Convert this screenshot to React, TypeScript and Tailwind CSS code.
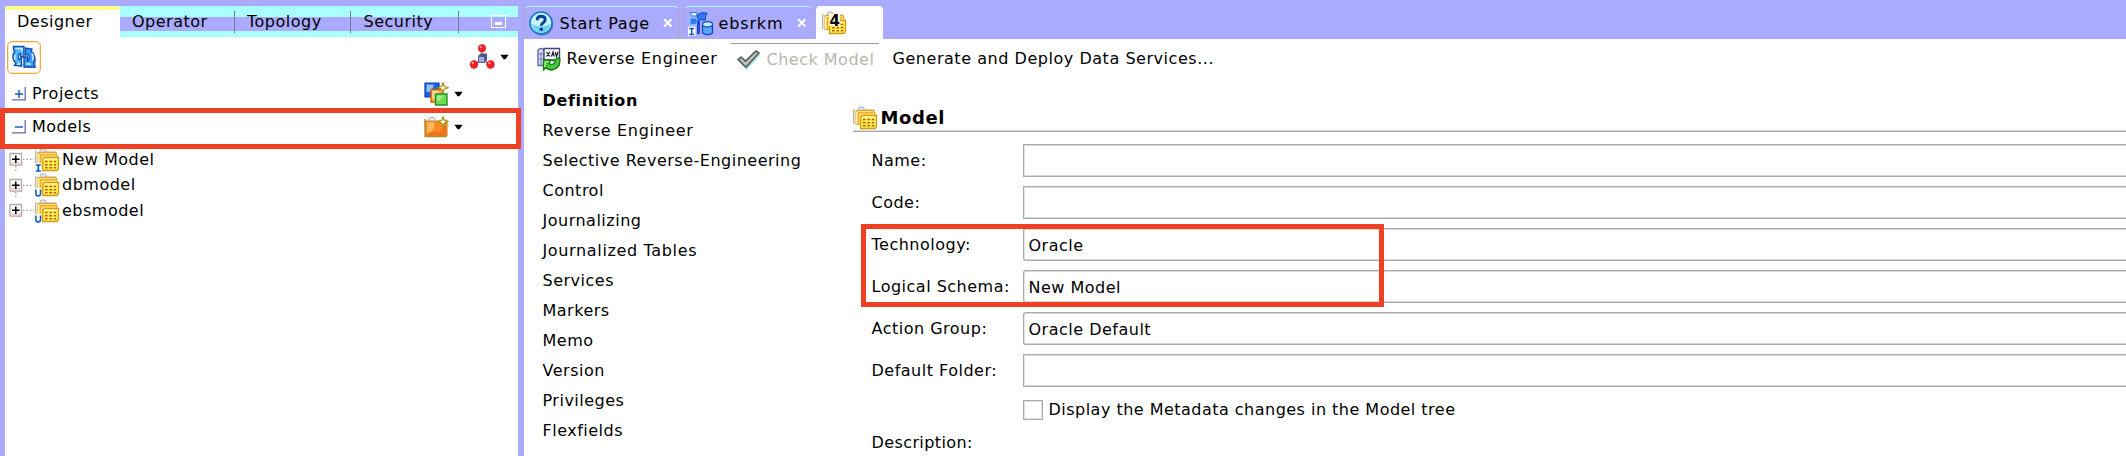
import React from "react";

function Text({ children, className = "" }: { children: React.ReactNode; className?: string }) {
  return <span className={"whitespace-pre " + className}>{children}</span>;
}

function Caret() {
  return (
    <svg width="9" height="6" viewBox="0 0 9 6">
      <path d="M0.4 0.8h8.2L5.4 5.2H3.6z" fill="#000" />
    </svg>
  );
}

function RefreshIcon() {
  return (
    <svg width="26" height="26" viewBox="0 0 26 26">
      <path d="M14 14v10h11V14zM5 21l5 2 4-3z" fill="#8a8a9a" opacity=".7" />
      <path d="M2.500 2.500H13V13H9.500V9.500C7 10 6.500 13 8 15.500L10.500 14v8L3.500 21.500l1.500-2C1 16 1 10 4 7.500L2.500 6z" fill="#58b4fc" stroke="#0c50b0" strokeWidth="1.300" />
      <path d="M14.500 11V4l6.500 1-1 2c4.500 3 5 9 2.500 12.500L24 23H13V13h3.500v4C19 16 19 12.500 17 10.500z" fill="#3c9cf8" stroke="#0c50b0" strokeWidth="1.300" />
      <path d="M4.500 4.500h6.500v3M3.800 11v5M6 20h3M21 9.500q2 3 .5 7M15 20h5" fill="none" stroke="#c8ecff" strokeWidth="1.500" />
    </svg>
  );
}

function MoleculeIcon() {
  return (
    <svg width="26" height="26" viewBox="0 0 26 26">
      <path d="M13 6v6M5 21l8-6 8 6" stroke="#888" strokeWidth="1.500" fill="none" />
      <path d="M9 12l2.500-2.500H18V16l-2 2.500H9z" fill="#55557f" />
      <path d="M9.500 12.500h6v6h-6z" fill="#a7acd8" stroke="#606090" />
      <circle cx="13" cy="4.300" r="4" fill="#ee2228" />
      <circle cx="5" cy="20.500" r="4.200" fill="#ee2228" />
      <circle cx="21.500" cy="20.500" r="4.200" fill="#ee2228" />
      <circle cx="11.800" cy="3" r="1.200" fill="#ff9a9a" />
      <circle cx="3.800" cy="19" r="1.200" fill="#ff9a9a" />
      <circle cx="20.300" cy="19" r="1.200" fill="#ff9a9a" />
    </svg>
  );
}

function Sparkle() {
  return <path d="M19 .6l1.300 3.700L24 5.700l-3.700 1.400L19 11l-1.300-3.900L14 5.700l3.700-1.400z" fill="#fffde0" stroke="#a89018" strokeWidth="1.200" />;
}

function ProjectIcon() {
  return (
    <svg width="25" height="24" viewBox="0 0 25 24">
      <path d="M1 1h14v14H1z" fill="#1d5fe0" stroke="#0c3aa8" strokeWidth="1.200" />
      <path d="M2.500 2.500h7v2.500l-4 5h-3z" fill="#8cc4ff" />
      <path d="M7 7.500h12v12.500H7z" fill="#ffae48" stroke="#d06008" strokeWidth="1.400" />
      <path d="M8.500 9h6v3h-4v5h-2z" fill="#ffe4a0" />
      <path d="M11.500 12h11.500v11H11.500z" fill="#6ddc50" stroke="#249028" strokeWidth="1.400" />
      <path d="M13 13.500h6l-3 5h-3z" fill="#a4f090" />
      <Sparkle />
    </svg>
  );
}

function NewFolderIcon() {
  return (
    <svg width="25" height="22" viewBox="0 0 25 22">
      <path d="M4 4l2-2.500h4l1 2.500" fill="#e8ecf4" stroke="#a8b0c0" />
      <path d="M1 5h15l7-1v16H2z" fill="#f98a28" stroke="#c87a20" />
      <path d="M3 6h7v6l-3 4-4 1z" fill="#ffb858" />
      <path d="M3 19l5-3h8l6-8v11.500z" fill="#f05818" opacity=".5" />
      <path d="M1 3v17.500h22" stroke="#b88a30" fill="none" strokeWidth="1.300" />
      <Sparkle />
    </svg>
  );
}

function ModelIcon({ badge }: { badge?: "I" | "U" | "4" }) {
  return (
    <svg width="25" height="24" viewBox="0 0 25 24">
      <path d="M.7 3v15" stroke="#b4b4ac" strokeWidth="1.300" />
      <path d="M5 3l1-2h4l2 3" fill="#d8eafa" stroke="#a8b4c4" />
      <path d="M3 4.500h18l1 3v11H3z" fill="#ffe468" stroke="#e0a838" strokeWidth="1.200" />
      <path d="M5.500 18V6.800h15" fill="none" stroke="#f8a838" strokeWidth="1.500" />
      <path d="M3.500 6v12" stroke="#fff4b8" />
      <path d="M4 4h17" stroke="#c8a868" />
      <path d="M8 10.500l2-1h13.500v11l-1.500 2H7.500z" fill="#fff050" stroke="#d09a18" strokeWidth="1.300" />
      <path d="M9 11h13" stroke="#fffbd0" />
      <path d="M10 12.700h2.600v1.500H10zM14.400 12.700H17v1.500h-2.600zM18.800 12.700h2.400v1.500h-2.400zM10 15.900h2.600v1.500H10zM14.400 15.900H17v1.500h-2.600zM18.800 15.900h2.400v1.500h-2.400zM10 19h2.600v1.400H10zM14.400 19H17v1.400h-2.600zM18.800 19h2.400v1.400h-2.400z" fill="#b85a10" />
      {badge === "I" && (
        <>
          <path d="M0 15h6.500v9H0z" fill="#fff" />
          <path d="M.8 17h5M3.300 17v6M.8 23h5" stroke="#1058b8" strokeWidth="1.700" />
        </>
      )}
      {badge === "U" && (
        <>
          <path d="M0 15h6.500v9H0z" fill="#fff" />
          <path d="M.9 16.500v4q0 2.500 2.300 2.500t2.300-2.500v-4" fill="none" stroke="#1058b8" strokeWidth="1.500" />
        </>
      )}
      {badge === "4" && <path d="M7 3h11v12H7z" fill="#fff8d8" />}
    </svg>
  );
}

function HelpIcon() {
  return (
    <svg width="25" height="25" viewBox="0 0 25 25">
      <circle cx="13" cy="13.200" r="11.300" fill="#6878b8" />
      <circle cx="12" cy="12" r="11" fill="#c8f4ff" stroke="#1878c8" strokeWidth="1.600" />
      <path d="M3 13a9 9 0 0 0 18 0q-9 5-18 0z" fill="#70d0fa" />
      <path d="M8.200 9.200q0-4 4-4t4 3.600q0 2-2.200 3.200-1.700 1-1.700 2.700" fill="none" stroke="#0a3c98" strokeWidth="2.900" />
      <circle cx="12.300" cy="18.300" r="1.800" fill="#0a3c98" />
    </svg>
  );
}

function PackageIcon() {
  return (
    <svg width="26" height="25" viewBox="0 0 26 25">
      <path d="M2 1.500h7v3.500H4z" fill="#e0f4ff" stroke="#3878e8" />
      <path d="M9 4q4-3.500 10-2l-1.500 3v4H10z" fill="#2f78ee" stroke="#1448c8" />
      <path d="M2 7h7v6l-7 1z" fill="#2f78ee" stroke="#88c8ff" />
      <path d="M9 9v14h3V10z" fill="#1f48d8" />
      <path d="M14.500 13v9q5 3.500 10 0v-9z" fill="#58a4f8" stroke="#1440c0" strokeWidth="1.200" />
      <ellipse cx="19.500" cy="13.300" rx="5" ry="2.600" fill="#c4ecff" stroke="#1440c0" strokeWidth="1.200" />
      <path d="M0 15.500h7.500V25H0z" fill="#fff" />
      <path d="M1.200 17.500h5M3.700 17v6M1.200 23.500h5" stroke="#1058b8" strokeWidth="1.600" />
    </svg>
  );
}

function ReverseIcon() {
  return (
    <svg width="24" height="24" viewBox="0 0 24 24">
      <path d="M1 3q3-3 6 0v15.500H1z" fill="#dcdcf8" stroke="#6868a8" strokeWidth="1.400" />
      <path d="M1 7h8M1 12h8M4 5v13" stroke="#7878b8" />
      <path d="M7 1.500h15.500V13H7z" fill="#f8f8ff" stroke="#484878" strokeWidth="1.400" />
      <path d="M9.500 5l3.500 4.500M13 5L9.500 9.500M14.500 9.500L16 5l1.200 4.500M18.300 5l1.200 4.500L21 5" stroke="#181828" strokeWidth="1.200" fill="none" />
      <path d="M6.500 13H14l-2 3.500q4 2.500 6.500-2L16 13.500l6.500-3q2 10.500-7.500 12.500-4 0-6-2.500L6.500 23z" fill="#48c838" stroke="#187818" strokeWidth="1.300" />
      <path d="M8 14.500h4M8 15v5" stroke="#b8ffa0" strokeWidth="1.200" />
    </svg>
  );
}

function CheckIcon() {
  return (
    <svg width="24" height="20" viewBox="0 0 24 20">
      <path d="M3 11l7 7.500L23 4" fill="none" stroke="#a0f4f4" strokeWidth="2" />
      <path d="M1 9.500l3-2.500 4.500 4L19 1l3 2L9 17.500z" fill="#aaa" stroke="#555" strokeWidth="1.400" />
      <path d="M4 9.500l4.500 4.500L19.500 3" fill="none" stroke="#ddd" />
    </svg>
  );
}

function CloseMark() {
  return (
    <svg width="10" height="10" viewBox="0 0 10 10">
      <path d="M1.200 1.200l7.200 7.200M8.400 1.200L1.200 8.400" stroke="#fff" strokeWidth="2.100" />
    </svg>
  );
}

function Toggle({ open }: { open?: boolean }) {
  return (
    <svg width="14" height="14" viewBox="0 0 14 14">
      <path d="M0 12.900h13.200V0" fill="none" stroke="#6868b8" strokeWidth="1.300" />
      <path d={open ? "M3 7h8" : "M3 7h8M7 3v8"} stroke="#1a60a8" strokeWidth="1.500" />
    </svg>
  );
}

function TreeRow({ label, badge, last }: { label: string; badge: "I" | "U"; last?: boolean }) {
  return (
    <div className="flex h-[25.5px] items-center pl-1">
      <svg width="26" height="25.5" viewBox="0 0 26 25.500">
        <path d="M1 6.500h11.500v11.500H1z" fill="#fff" stroke="#aaa" strokeWidth="1.300" />
        <path d="M1.700 15.300h10v2.200h-10z" fill="#ffd0d0" />
        <path d="M3 12.300h7.600M6.800 8.500v7.600" stroke="#000" strokeWidth="1.500" />
        <path d="M14 12.300h11" stroke="#999" strokeWidth="1.300" strokeDasharray="1.400 2.100" />
        {!last && <path d="M6.800 19v6" stroke="#999" strokeWidth="1.300" strokeDasharray="1.400 2.100" />}
      </svg>
      <div className="w-[25px] shrink-0"><ModelIcon badge={badge} /></div>
      <Text className="pl-[2px]">{label}</Text>
    </div>
  );
}

function SideTab({ label, className }: { label: string; className: string }) {
  return (
    <div className={"flex h-[31px] items-center justify-between " + className}>
      <Text>{label}</Text>
      <span className="h-[22px] w-px bg-[#70809c]" />
    </div>
  );
}

function Sidebar() {
  return (
    <aside className="relative flex w-[523.5px] shrink-0 flex-col bg-[#aaaaff] pl-[5px] pr-[6px] pt-[6px]">
      <div className="flex h-[31px] shrink-0 bg-[linear-gradient(#aaffff_0_11.5px,#aaaaff_11.5px_25.5px,#aaffff_25.5px)]">
        <div className="flex w-[115px] items-center rounded-t border-t-[4px] border-[#ffff88] bg-white pb-[3px] pl-3">
          <Text>Designer</Text>
        </div>
        <SideTab label="Operator" className="w-[115px] pl-[12px]" />
        <SideTab label="Topology" className="w-[115.5px] pl-[12px]" />
        <SideTab label="Security" className="w-[108px] pl-[13px]" />
        <div className="flex flex-1 items-center pl-[32px]">
          <div className="flex h-[13px] w-[15px] items-end justify-center border border-white pb-[2px]">
            <div className="h-[3px] w-[7px] bg-white" />
          </div>
        </div>
      </div>
      <div className="flex flex-1 flex-col bg-white">
        <div className="flex h-[40px] items-center justify-between pl-[2px] pr-[9px]">
          <div className="flex h-[33px] w-[34px] items-center justify-center rounded-[5px] border-[1.5px] border-[#ffa838] shadow-[inset_0_0_0_1px_#ffe6c0]">
            <RefreshIcon />
          </div>
          <div className="flex items-center gap-[5px]"><MoleculeIcon /><Caret /></div>
        </div>
        <div className="flex h-[33px] items-center pl-[7px]">
          <Toggle />
          <Text className="w-[398px] pl-[6px]">Projects</Text>
          <ProjectIcon />
          <span className="pl-[5px]"><Caret /></span>
        </div>
        <div className="flex h-[34px] items-center pl-[7px]">
          <Toggle open />
          <Text className="w-[398px] pl-[6px]">Models</Text>
          <NewFolderIcon />
          <span className="pl-[5px]"><Caret /></span>
        </div>
        <div className="pt-[3px]">
          <TreeRow label="New Model" badge="I" />
          <TreeRow label="dbmodel" badge="U" />
          <TreeRow label="ebsmodel" badge="U" last />
        </div>
      </div>
      <div className="absolute left-0 top-[107.5px] h-[41px] w-[520.5px] border-[5px] border-[#ee4023]" />
    </aside>
  );
}

const sections = ["Definition", "Reverse Engineer", "Selective Reverse-Engineering", "Control", "Journalizing", "Journalized Tables", "Services", "Markers", "Memo", "Version", "Privileges", "Flexfields"];

const fields = [
  { label: "Name:", value: "", combo: false },
  { label: "Code:", value: "", combo: false },
  { label: "Technology:", value: "Oracle", combo: true },
  { label: "Logical Schema:", value: "New Model", combo: true },
  { label: "Action Group:", value: "Oracle Default", combo: true },
  { label: "Default Folder:", value: "", combo: false },
];

function EditorTabs() {
  return (
    <div className="flex h-[39px] shrink-0 bg-[#aaaaff] pt-[6px]">
      <div className="flex w-[156px] items-center rounded-t-md border-x border-t border-x-[#b0a8c8] border-t-[#aaffff] pl-[4px]">
        <HelpIcon />
        <Text className="w-[109px] pl-[6px] pt-[2px] tracking-[0.75px]">Start Page</Text>
        <CloseMark />
      </div>
      <div className="ml-[3px] flex w-[131px] items-center rounded-t-md border-x border-t border-x-[#b0a8c8] border-t-[#aaffff] pl-[4px]">
        <PackageIcon />
        <Text className="w-[83px] pl-[5px] pt-[2px] tracking-[0.85px]">ebsrkm</Text>
        <CloseMark />
      </div>
      <div className="relative ml-[2px] flex w-[67px] items-center rounded-t bg-white pl-[6px]">
        <ModelIcon badge="4" />
        <span className="absolute left-[14px] top-[8px] text-[15px] font-bold leading-[14px] tracking-normal">4</span>
      </div>
    </div>
  );
}

function Editor() {
  return (
    <main className="flex min-w-0 flex-1 flex-col bg-white">
      <EditorTabs />
      <div className="flex h-[40px] shrink-0 items-center pl-[13px]">
        <ReverseIcon />
        <Text className="w-[170px] pl-[6px] tracking-[0.65px]">Reverse Engineer</Text>
        <div className="flex h-[32px] w-[148px] items-center border-t border-[#999] pl-[6px] text-[#b8b8b0]">
          <CheckIcon />
          <Text className="pl-[6px]">Check Model</Text>
        </div>
        <Text className="pl-[14px] tracking-[0.54px]">Generate and Deploy Data Services...</Text>
      </div>
      <div className="flex min-h-0 flex-1">
        <nav className="flex w-[329px] shrink-0 flex-col pl-[19px] pt-[7px]">
          {sections.map((s, i) => (
            <div key={s} className={"flex h-[30px] shrink-0 items-center " + (i === 0 ? "font-bold tracking-[0.65px]" : i === 1 || i === 5 ? "tracking-[0.65px]" : "")}>
              <Text>{s}</Text>
            </div>
          ))}
        </nav>
        <section className="relative min-w-0 flex-1 pt-[25px]">
          <div className="flex h-[28px] items-center border-b border-[#aaa] font-bold shadow-[inset_0_-1px_#d8d8d8]">
            <ModelIcon />
            <Text className="pl-[3px] pt-px text-[18px] tracking-[0.6px]">Model</Text>
          </div>
          <div className="pt-[12px]">
            {fields.map((f) => (
              <div key={f.label} className="mb-[9px] flex h-[33px] pl-[19px]">
                <div className="flex w-[151px] shrink-0 items-center"><Text>{f.label}</Text></div>
                <div className={"flex flex-1 items-center border border-r-0 border-[#aaa] pl-[5px] pt-[2px] shadow-[inset_0_1px_#d8d8d8,inset_0_-1px_#d8d8d8,inset_1px_0_#e4e4e4] " + (f.combo ? "rounded-l-[3px]" : "")}>
                  <Text>{f.value}</Text>
                </div>
              </div>
            ))}
          </div>
          <div className="flex items-center pl-[170px] pt-[4px]">
            <div className="h-[20px] w-[20px] border border-[#aaa] shadow-[inset_0_0_0_1px_#e0e0e0]" />
            <Text className="pl-[6px] leading-[20px] tracking-[0.48px]">Display the Metadata changes in the Model tree</Text>
          </div>
          <div className="flex h-[24px] items-center pl-[19px] pt-[22px]"><Text className="tracking-[0.4px]">Description:</Text></div>
          <div className="absolute left-[8px] top-[145px] h-[83px] w-[523px] border-[5px] border-[#ee4023]" />
        </section>
      </div>
    </main>
  );
}

export default function App() {
  return (
    <div className="flex h-[456px] w-full overflow-hidden bg-white font-['DejaVu_Sans',sans-serif] text-[16px] leading-[20px] tracking-[0.5px] text-black [&_svg]:block [&_svg]:shrink-0">
      <Sidebar />
      <Editor />
    </div>
  );
}
